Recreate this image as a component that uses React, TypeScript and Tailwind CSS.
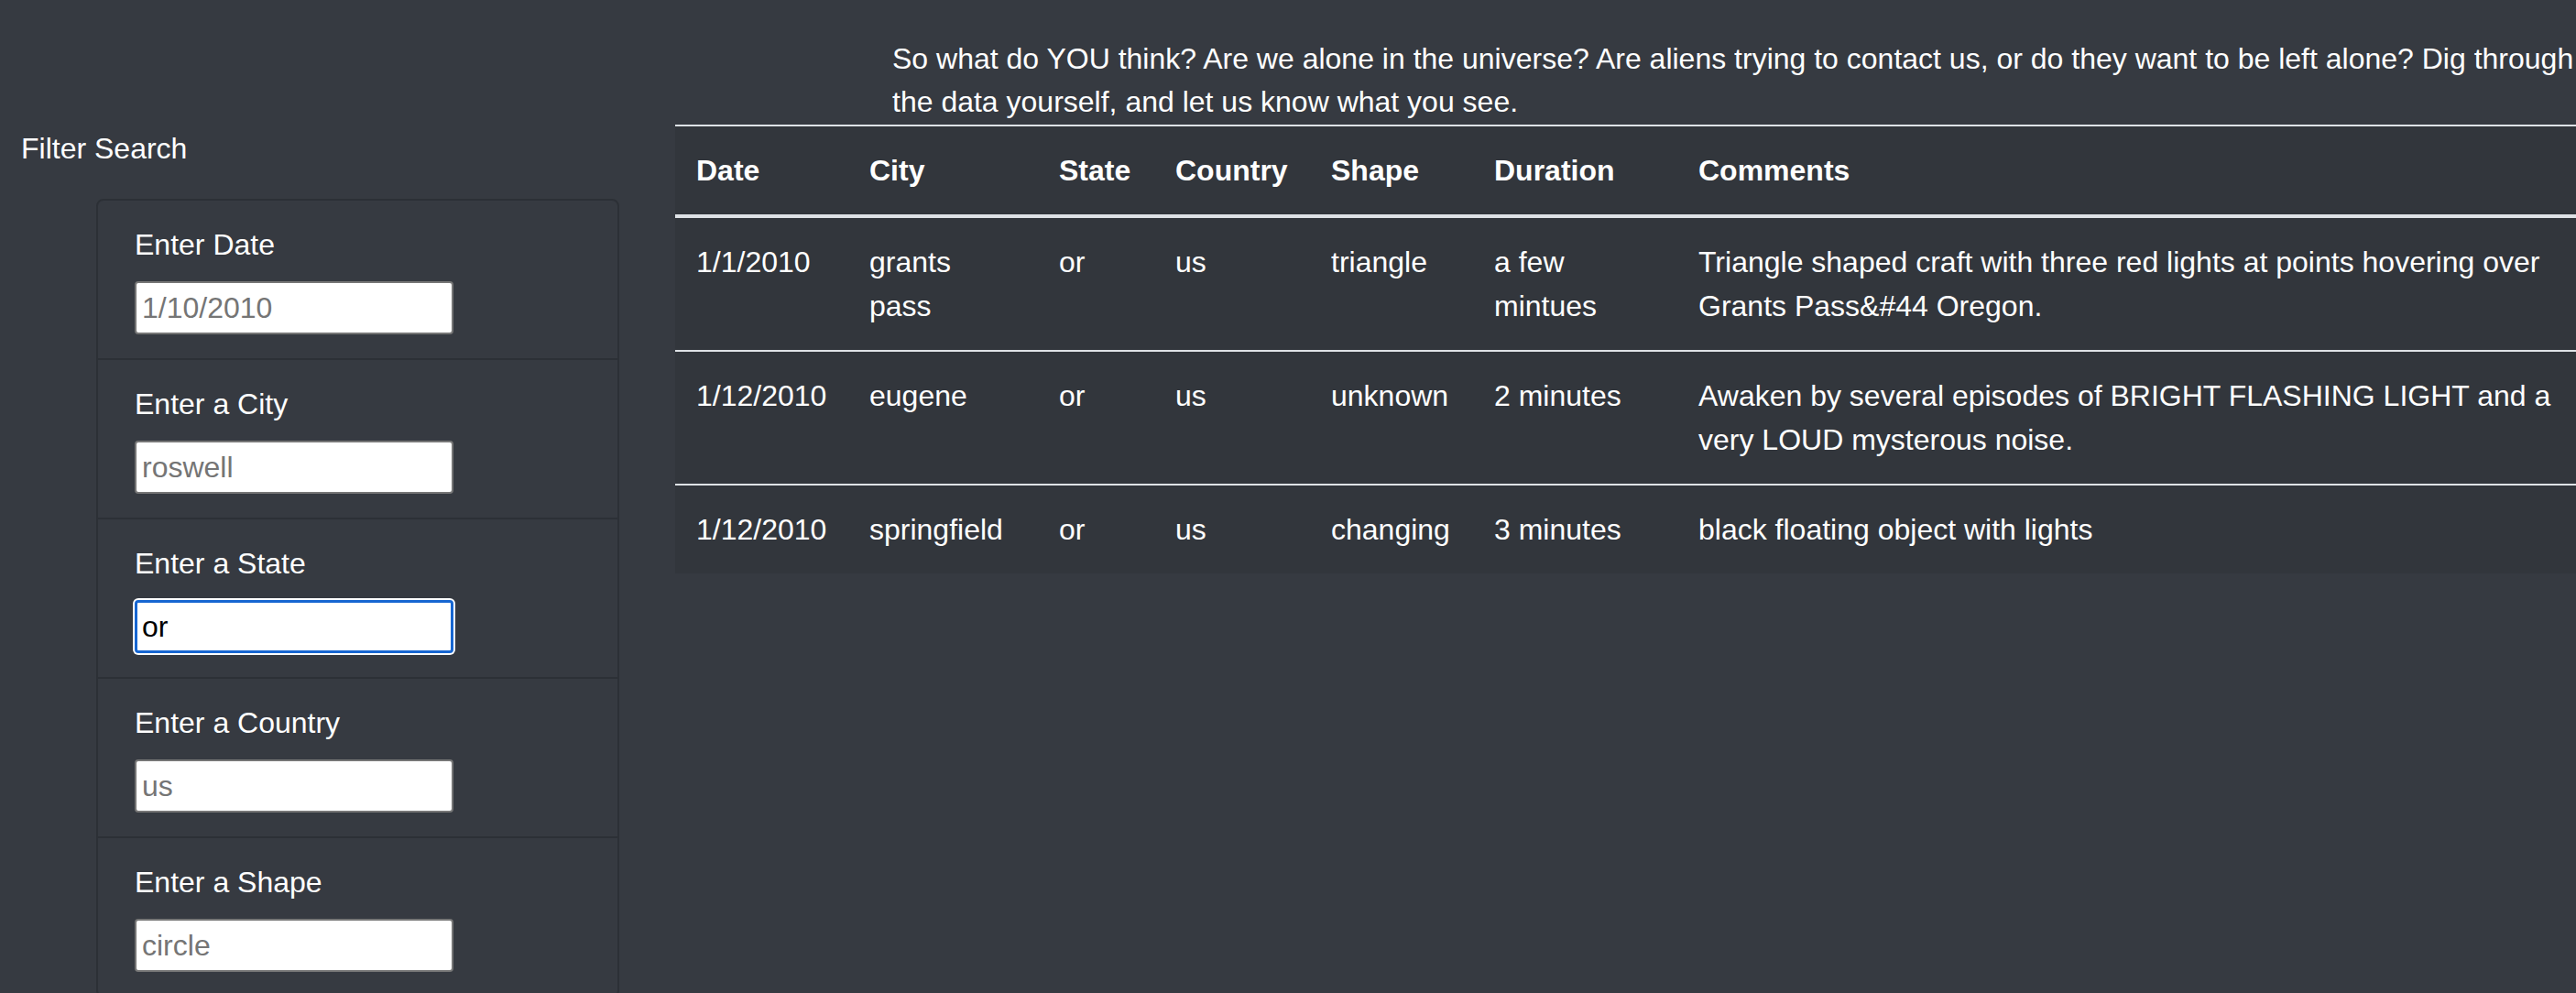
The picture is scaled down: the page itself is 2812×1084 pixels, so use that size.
import React from "react";

const filters = [
  { label: "Enter Date", placeholder: "1/10/2010" },
  { label: "Enter a City", placeholder: "roswell" },
  { label: "Enter a State", placeholder: "", value: "or", focused: true },
  { label: "Enter a Country", placeholder: "us" },
  { label: "Enter a Shape", placeholder: "circle" },
];

const sightings = [
  {
    date: "1/1/2010",
    city: "grants pass",
    state: "or",
    country: "us",
    shape: "triangle",
    duration: "a few mintues",
    comments:
      "Triangle shaped craft with three red lights at points hovering over Grants Pass&#44 Oregon.",
  },
  {
    date: "1/12/2010",
    city: "eugene",
    state: "or",
    country: "us",
    shape: "unknown",
    duration: "2 minutes",
    comments:
      "Awaken by several episodes of BRIGHT FLASHING LIGHT and a very LOUD mysterous noise.",
  },
  {
    date: "1/12/2010",
    city: "springfield",
    state: "or",
    country: "us",
    shape: "changing",
    duration: "3 minutes",
    comments: "black floating object with lights",
  },
];

const App = () => {
  return (
    <div className="h-screen w-full overflow-hidden bg-[#363a41] font-['Liberation_Sans',Arial,sans-serif] text-[32px] text-white">
      <div className="flex">
        {/* filters */}
        <aside className="w-[737px] shrink-0 pt-[138px]">
          <h5 className="pl-[23px] leading-[48px]">Filter Search</h5>
          <ul className="ml-[105px] mt-[31px] w-[571px] rounded-[8px] border-2 border-[#2c3036]">
            {filters.map((f, i) => (
              <li
                key={f.label}
                className={
                  i < filters.length - 1
                    ? "flex flex-col border-b-2 border-[#2c3036] px-[40px] pb-[26px] pt-[24px]"
                    : "flex flex-col px-[40px] pb-[26px] pt-[24px]"
                }
              >
                <label className="leading-[48px]">{f.label}</label>
                <input
                  type="text"
                  placeholder={f.placeholder}
                  defaultValue={f.value}
                  className={
                    f.focused
                      ? "mt-[16px] h-[58px] w-[348px] rounded-[4px] border-[3px] border-[#1766d1] bg-white px-[5px] text-[32px] text-black shadow-[0_0_0_2px_#ffffff] outline-none placeholder:text-[#757575]"
                      : "mt-[16px] h-[58px] w-[348px] rounded-[4px] border-2 border-[#767676] bg-white px-[6px] text-[32px] text-black outline-none placeholder:text-[#757575]"
                  }
                />
              </li>
            ))}
          </ul>
        </aside>

        {/* results */}
        <main className="min-w-0 flex-1 pt-[41px]">
          <p className="ml-[237px] whitespace-nowrap leading-[47px]">
            So what do YOU think? Are we alone in the universe? Are aliens trying to contact us, or do they want to be left alone? Dig through
            <br />
            the data yourself, and let us know what you see.
          </p>
          <table className="mt-px w-[2101px] table-fixed border-collapse bg-[#32363c] text-left">
            <colgroup>
              <col className="w-[189px]" />
              <col className="w-[207px]" />
              <col className="w-[127px]" />
              <col className="w-[170px]" />
              <col className="w-[178px]" />
              <col className="w-[223px]" />
              <col className="w-[1007px]" />
            </colgroup>
            <thead>
              <tr>
                {["Date", "City", "State", "Country", "Shape", "Duration", "Comments"].map((h) => (
                  <th
                    key={h}
                    className="border-b-4 border-t-2 border-[#dee2e6] px-[23px] py-[24px] align-bottom font-bold leading-[48px]"
                  >
                    {h}
                  </th>
                ))}
              </tr>
            </thead>
            <tbody>
              {sightings.map((s, i) => (
                <tr key={i} className={i > 0 ? "border-t-2 border-[#dee2e6]" : ""}>
                  <td className="whitespace-nowrap px-[23px] py-[24px] align-top leading-[48px]">{s.date}</td>
                  <td className="py-[24px] pl-[23px] pr-[30px] align-top leading-[48px]">{s.city}</td>
                  <td className="px-[23px] py-[24px] align-top leading-[48px]">{s.state}</td>
                  <td className="px-[23px] py-[24px] align-top leading-[48px]">{s.country}</td>
                  <td className="whitespace-nowrap px-[23px] py-[24px] align-top leading-[48px]">{s.shape}</td>
                  <td className="px-[23px] py-[24px] align-top leading-[48px]">{s.duration}</td>
                  <td className="px-[23px] py-[24px] align-top leading-[48px]">{s.comments}</td>
                </tr>
              ))}
            </tbody>
          </table>
        </main>
      </div>
    </div>
  );
};

export default App;
